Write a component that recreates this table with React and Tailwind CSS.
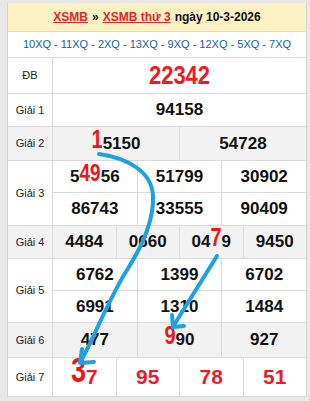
import React from 'react';

const font = { fontFamily: '"Liberation Sans", Arial, sans-serif' };

function Label({ children }) {
    return (
        <div className="w-[45px] shrink-0 border-r border-[#dadada] flex items-center justify-center text-[11px] text-[#222]">
            {children}
        </div>
    );
}

function Big({ children, size = 'text-[20px]' }) {
    return <span className={`inline-block origin-bottom scale-y-[1.3] leading-none text-[#f01414] ${size}`}>{children}</span>;
}

function Cells({ items, red }) {
    return (
        <div className="flex-1 flex">
            {items.map((it, i) => (
                <div key={i} className={`flex-1 flex items-center justify-center font-bold ${red ? 'text-[#ea1c2a] text-[21px]' : 'text-[#111] text-[17px]'} ${i > 0 ? 'border-l border-[#dadada]' : ''}`}>
                    {it}
                </div>
            ))}
        </div>
    );
}

export default function App() {
    return (
        <div className="relative w-[310px] h-[401px] overflow-hidden bg-[#e8e8e8] pt-[3px] pl-[7px] pr-[3px]" style={font}>
            <div className="bg-white border-l border-r border-[#d4d4d4]">
                <div className="h-[29px] bg-[#fcf1c3] border-b border-[#dadada] flex items-center justify-center text-[12px] font-bold text-[#111]">
                    <a className="text-[#e8232b] underline">XSMB</a>
                    <span className="mx-[4px]">»</span>
                    <a className="text-[#e8232b] underline">XSMB thứ 3</a>
                    <span className="ml-[4px]">ngày 10-3-2026</span>
                </div>
                <div className="h-[26px] border-b border-[#dadada] flex items-center justify-center text-[11px] text-[#1460ad]">
                    10XQ - 11XQ - 2XQ - 13XQ - 9XQ - 12XQ - 5XQ - 7XQ
                </div>

                <div className="h-[36px] flex border-b border-[#dadada]">
                    <Label>ĐB</Label>
                    <div className="flex-1 flex items-center justify-center">
                        <span className="inline-block scale-y-[1.15] text-[22px] font-bold text-[#ea1c2a]">22342</span>
                    </div>
                </div>

                <div className="h-[33px] flex border-b border-[#dadada]">
                    <Label>Giải 1</Label>
                    <Cells items={['94158']} />
                </div>

                <div className="h-[34px] flex border-b border-[#dadada] bg-[#f2f2f2]">
                    <Label>Giải 2</Label>
                    <Cells items={[<span><Big>1</Big>5150</span>, '54728']} />
                </div>

                <div className="h-[65px] flex border-b border-[#dadada]">
                    <Label>Giải 3</Label>
                    <div className="flex-1 flex flex-col">
                        <div className="h-[32px] flex border-b border-[#dadada]">
                            <Cells items={[<span>5<Big size="text-[19px]">49</Big>56</span>, '51799', '30902']} />
                        </div>
                        <div className="flex-1 flex">
                            <Cells items={['86743', '33555', '90409']} />
                        </div>
                    </div>
                </div>

                <div className="h-[33px] flex border-b border-[#dadada] bg-[#f2f2f2]">
                    <Label>Giải 4</Label>
                    <Cells items={['4484', '0660', <span>04<Big>7</Big>9</span>, '9450']} />
                </div>

                <div className="h-[64px] flex border-b border-[#dadada]">
                    <Label>Giải 5</Label>
                    <div className="flex-1 flex flex-col">
                        <div className="h-[32px] flex border-b border-[#dadada]">
                            <Cells items={['6762', '1399', '6702']} />
                        </div>
                        <div className="flex-1 flex">
                            <Cells items={['6991', '1310', '1484']} />
                        </div>
                    </div>
                </div>

                <div className="h-[35px] flex border-b border-[#dadada] bg-[#f2f2f2]">
                    <Label>Giải 6</Label>
                    <Cells items={['477', <span><Big>9</Big>90</span>, '927']} />
                </div>

                <div className="h-[39px] flex border-b border-[#dadada]">
                    <Label>Giải 7</Label>
                    <Cells red items={[<span><Big size="text-[27px]">3</Big>7</span>, '95', '78', '51']} />
                </div>
            </div>

            <svg className="absolute inset-0 pointer-events-none" width="310" height="401" viewBox="0 0 310 401">
                <g fill="none" stroke="#1fa0e2" strokeWidth="4" strokeLinecap="round" strokeLinejoin="round">
                    <path d="M99,154 C128,158 152,172 153,196 S143,245 127,270 S95,335 81,361" />
                    <path d="M82,349 L80,363 L94,362" />
                    <path d="M217,256 L174,325" />
                    <path d="M172,315 L173,327 L184,326" />
                </g>
            </svg>
        </div>
    );
}
